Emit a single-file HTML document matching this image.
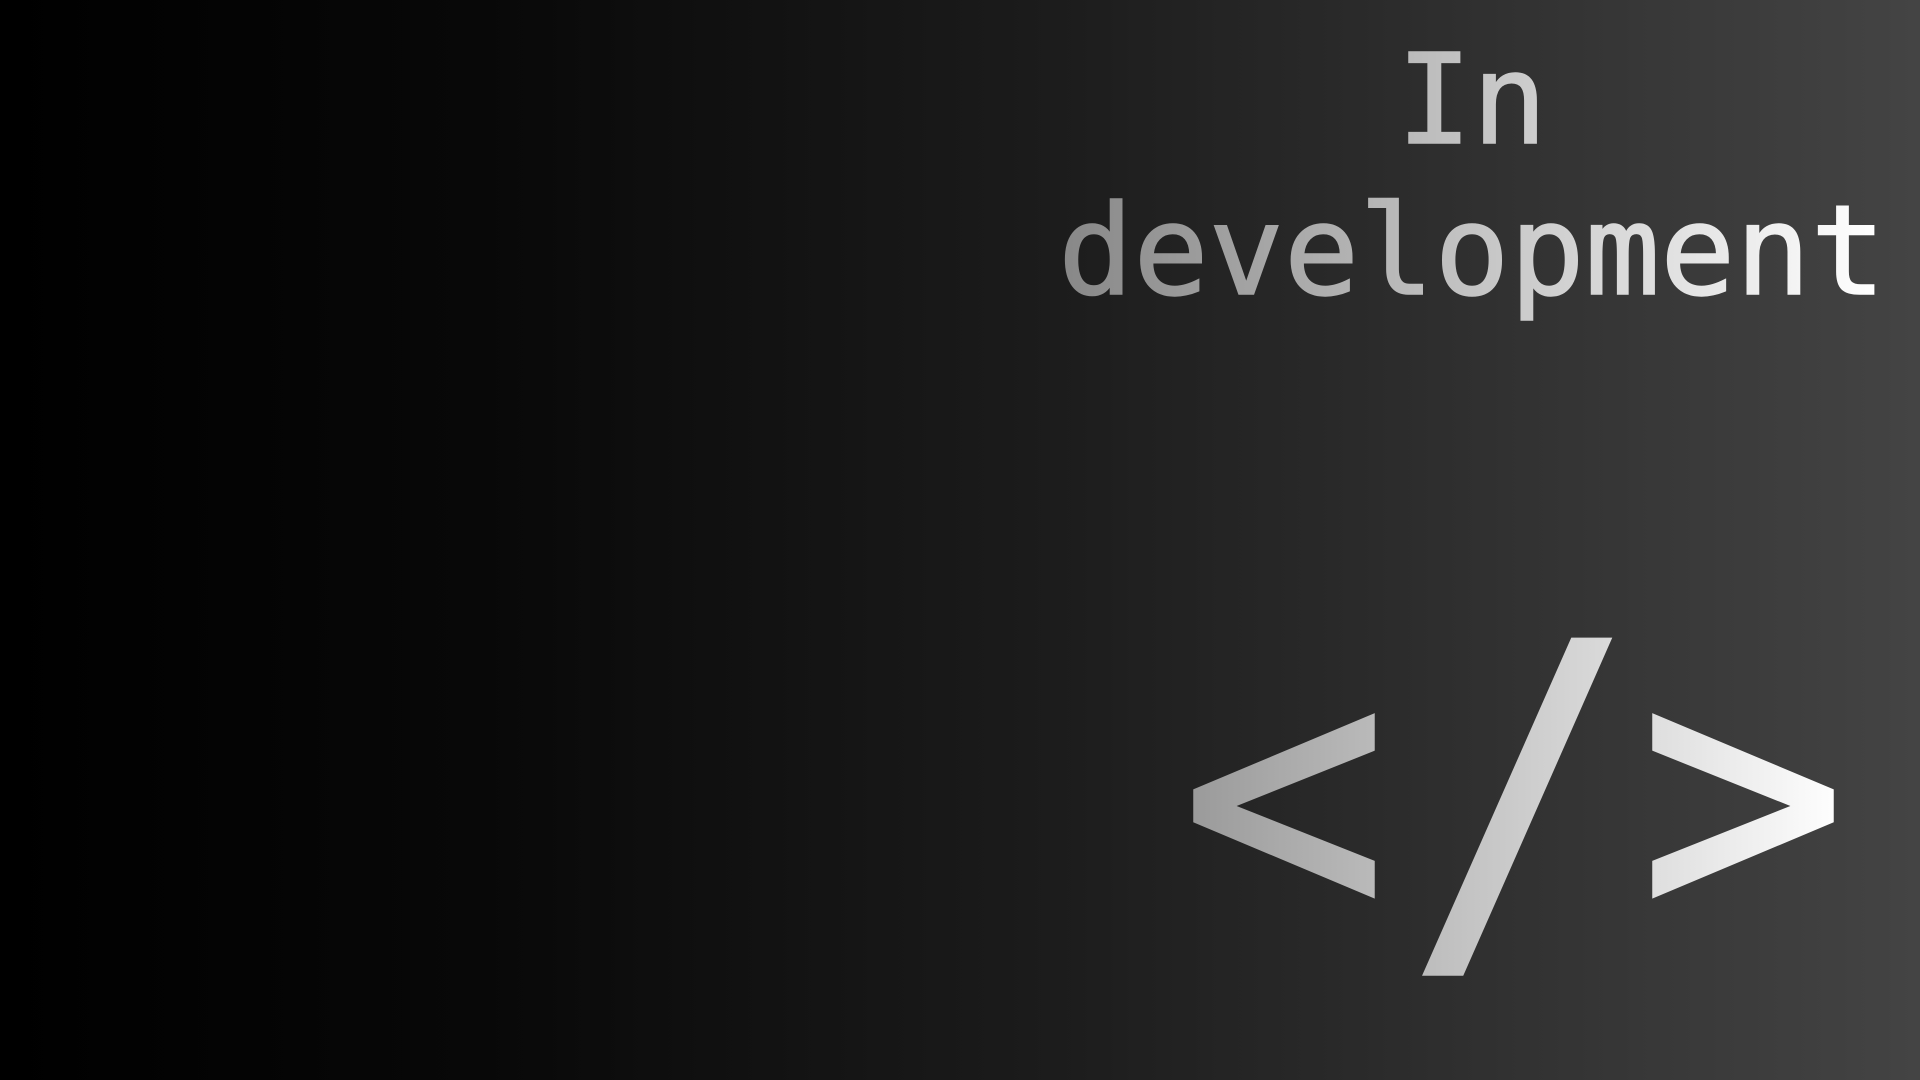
<!DOCTYPE html>
<html><head><meta charset="utf-8"><style>
html,body{margin:0;padding:0;width:1920px;height:1080px;overflow:hidden;background:linear-gradient(90deg,#000 0%,#080808 25%,#1c1c1c 55%,#2e2e2e 75%,#444 100%);}
svg{position:absolute;left:0;top:0}
</style></head><body>
<svg width="1920" height="1080" xmlns="http://www.w3.org/2000/svg">
<defs>
<linearGradient id="g" gradientUnits="userSpaceOnUse" x1="1063" y1="0" x2="1876" y2="0">
<stop offset="0" stop-color="#888"/><stop offset="1" stop-color="#fff"/>
</linearGradient>
<linearGradient id="g2" gradientUnits="userSpaceOnUse" x1="1190" y1="0" x2="1840" y2="0">
<stop offset="0" stop-color="#999"/><stop offset="1" stop-color="#fff"/>
</linearGradient>
</defs>
<g font-family="'DejaVu Sans Mono','Liberation Mono',monospace" fill="url(#g)" stroke="url(#g)" stroke-width="1.5" text-anchor="middle" font-size="125">
<text x="1472" y="143">In</text>
<text x="1472" y="294">development</text>
</g>
<g font-family="'DejaVu Sans Mono','Liberation Mono',monospace" font-size="380" fill="url(#g2)" stroke="url(#g2)" stroke-width="5" text-anchor="middle">
<text x="1300" y="939" transform="translate(1284 805) scale(0.9024 0.96) translate(-1300 -819)">&lt;</text>
<text x="1515" y="939" transform="translate(1517 975) scale(1.006 1.066) translate(-1510 -976)">/</text>
<text x="1730" y="939" transform="translate(1743 805) scale(0.9024 0.96) translate(-1730 -819)">&gt;</text>
</g>
</svg>
</body></html>
